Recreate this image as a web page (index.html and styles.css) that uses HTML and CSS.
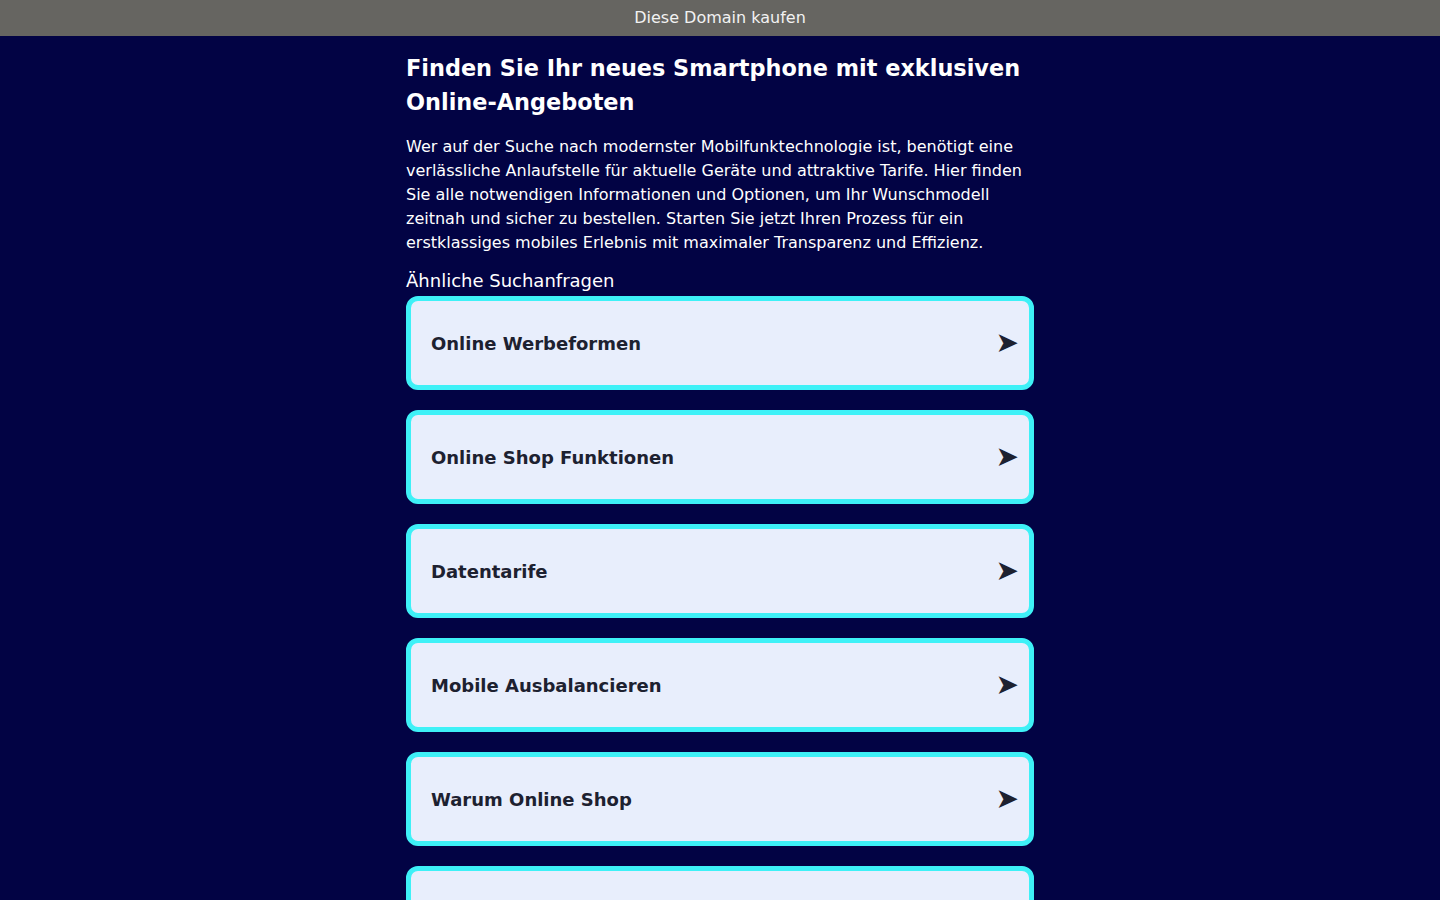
FILE: index.html
```html
<!DOCTYPE html>
<html lang="de">
<head>
<meta charset="utf-8">
<title>Smartphone</title>
<link rel="stylesheet" href="styles.css">
</head>
<body>
<div class="topbar"><a href="#">Diese Domain kaufen</a></div>
<main class="content">
  <h1 class="title">Finden Sie Ihr neues Smartphone mit exklusiven Online-Angeboten</h1>
  <p class="intro">Wer auf der Suche nach modernster Mobilfunktechnologie ist, benötigt eine verlässliche Anlaufstelle für aktuelle Geräte und attraktive Tarife. Hier finden Sie alle notwendigen Informationen und Optionen, um Ihr Wunschmodell zeitnah und sicher zu bestellen. Starten Sie jetzt Ihren Prozess für ein erstklassiges mobiles Erlebnis mit maximaler Transparenz und Effizienz.</p>
  <h2 class="related">Ähnliche Suchanfragen</h2>
  <div class="list">
    <a class="card" href="#"><span>Online Werbeformen</span><span class="arrow">➤</span></a>
    <a class="card" href="#"><span>Online Shop Funktionen</span><span class="arrow">➤</span></a>
    <a class="card" href="#"><span>Datentarife</span><span class="arrow">➤</span></a>
    <a class="card" href="#"><span>Mobile Ausbalancieren</span><span class="arrow">➤</span></a>
    <a class="card" href="#"><span>Warum Online Shop</span><span class="arrow">➤</span></a>
    <a class="card" href="#"><span>Handy Vergleich</span><span class="arrow">➤</span></a>
  </div>
</main>
</body>
</html>
```
FILE: styles.css
```css
html, body {
  margin: 0;
  padding: 0;
}
body {
  background: #020344;
  font-family: "DejaVu Sans", sans-serif;
  color: #ffffff;
}
.topbar {
  height: 36px;
  background: #666561;
  display: flex;
  align-items: center;
  justify-content: center;
}
.topbar a {
  color: #f2f2f2;
  text-decoration: none;
  font-size: 16px;
  line-height: 20px;
  margin-top: -1px;
}
.content {
  width: 628px;
  margin: 0 auto;
  padding-top: 15px;
}
.title {
  font-size: 22.4px;
  line-height: 34px;
  font-weight: bold;
  margin: 0 0 16px;
}
.intro {
  font-size: 16px;
  line-height: 24px;
  margin: 0 0 12px;
}
.related {
  font-size: 18px;
  font-weight: normal;
  line-height: 27px;
  margin: 0 0 2px;
}
.list {
  display: flex;
  flex-direction: column;
  gap: 20px;
}
.card {
  height: 94px;
  box-sizing: border-box;
  border: 5px solid #3ef1f7;
  border-radius: 12px;
  background: #e8eefc;
  display: flex;
  align-items: center;
  justify-content: space-between;
  padding: 0 10px 0 20px;
  color: #1d2130;
  text-decoration: none;
  font-size: 18px;
  font-weight: bold;
}
.arrow {
  font-size: 28px;
  line-height: 1;
  font-weight: normal;
  color: #1d2130;
  margin-top: -1px;
}
```
